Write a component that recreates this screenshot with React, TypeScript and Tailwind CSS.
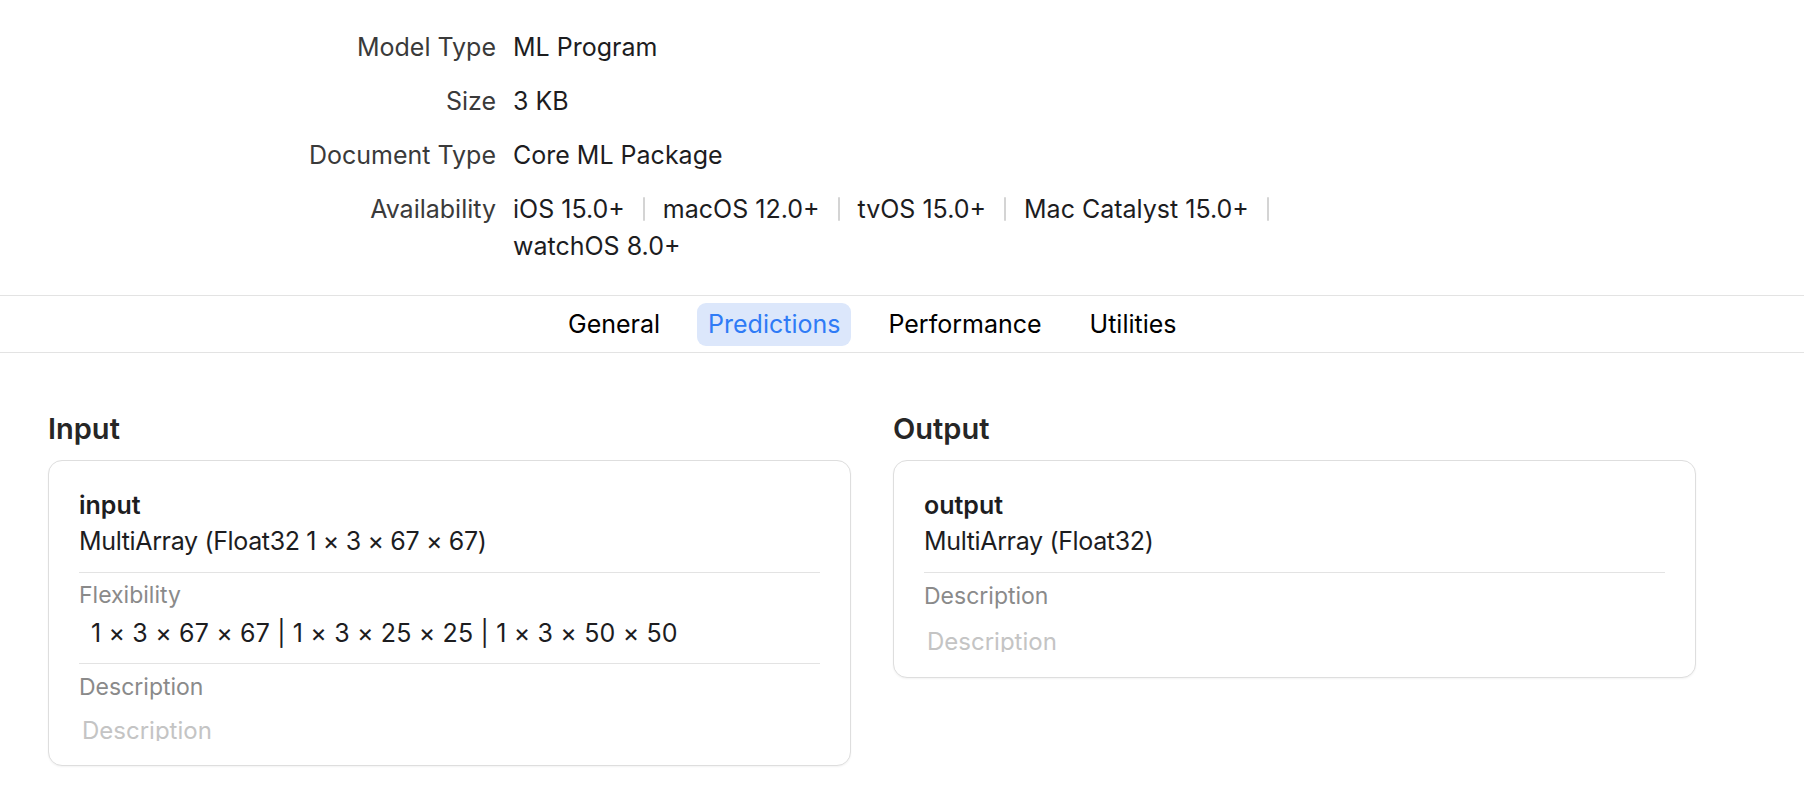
import React from 'react';

const font = { fontFamily: 'Inter, "Noto Sans", "Liberation Sans", sans-serif' };

const details: { label: string; value: string }[] = [
  { label: 'Model Type', value: 'ML Program' },
  { label: 'Size', value: '3 KB' },
  { label: 'Document Type', value: 'Core ML Package' },
];

const platforms = ['iOS 15.0+', 'macOS 12.0+', 'tvOS 15.0+', 'Mac Catalyst 15.0+'];

const tabs = ['General', 'Predictions', 'Performance', 'Utilities'];

function Sep() {
  return <span className="mx-[18px] inline-block h-[24px] w-[2px] rounded bg-[#d4d4d4] align-middle" />;
}

function Divider() {
  return <div className="h-px bg-[#e3e3e3]" />;
}

function Placeholder() {
  // text field placeholder, clipped by the field
  return (
    <div className="h-[25px] overflow-hidden pl-[3px]">
      <div className="text-[24px] leading-[30px] text-[#c4c4c4]">Description</div>
    </div>
  );
}

function FeatureCard({ name, type, flex }: { name: string; type: string; flex?: string }) {
  return (
    <div className={`w-[803px] rounded-[14px] border border-[#dedede] bg-white px-[30px] pt-[28px] shadow-[0_1px_2px_rgba(0,0,0,0.05)] ${flex ? 'pb-[24px]' : 'pb-[25px]'}`}>
      <div className="text-[25px] font-semibold leading-[32px] text-[#1d1d1f]">{name}</div>
      <div className="mt-[4px] text-[25px] leading-[32px] tracking-[-0.35px] text-[#1d1d1f]">{type}</div>
      <div className="mt-[15px]"><Divider /></div>
      {flex && (
        <>
          <div className="mt-[7px] text-[23px] leading-[30px] text-[#8a8a8a]">Flexibility</div>
          <div className="mt-[7px] pl-[12px] text-[25px] leading-[32px] tracking-[0.15px] text-[#1d1d1f]">{flex}</div>
          <div className="mt-[14px]"><Divider /></div>
        </>
      )}
      <div className="mt-[8px] text-[23px] leading-[30px] text-[#8a8a8a]">Description</div>
      <div className={flex ? 'mt-[14px]' : 'mt-[16px]'}><Placeholder /></div>
    </div>
  );
}

export default function App() {
  return (
    <div className="min-h-screen bg-white text-[#1d1d1f]" style={font}>
      <div className="grid grid-cols-[496px_1fr] gap-x-[17px] gap-y-[22px] pt-[31px]">
        {details.map(d => (
          <React.Fragment key={d.label}>
            <div className="text-right text-[25px] leading-[32px] text-[#3a3a3a]">{d.label}</div>
            <div className="text-[25px] leading-[32px]">{d.value}</div>
          </React.Fragment>
        ))}
        <div className="text-right text-[25px] leading-[32px] text-[#3a3a3a]">Availability</div>
        <div className="flex flex-col gap-[5px] text-[25px] leading-[32px]">
          <div className="flex items-center">
            {platforms.map(p => (
              <React.Fragment key={p}>
                <span>{p}</span>
                <Sep />
              </React.Fragment>
            ))}
          </div>
          <div>watchOS 8.0+</div>
        </div>
      </div>

      <div className="mt-[33px]"><Divider /></div>
      <div className="flex h-[56px] items-center gap-[26px] pl-[557px]">
        {tabs.map(t => (
          <div
            key={t}
            className={
              t === 'Predictions'
                ? 'rounded-[9px] bg-[#dce7fb] px-[11px] text-[25px] leading-[43px] text-[#2f7bf6]'
                : 'px-[11px] text-[25px] leading-[43px] text-black'
            }
          >
            {t}
          </div>
        ))}
      </div>
      <Divider />

      <div className="flex items-start gap-[42px] pl-[48px] pt-[58px]">
        <div className="flex flex-col gap-[13px]">
          <div className="text-[29px] font-semibold leading-[36px] text-[#262626]">Input</div>
          <FeatureCard
            name="input"
            type="MultiArray (Float32 1 × 3 × 67 × 67)"
            flex="1 × 3 × 67 × 67 | 1 × 3 × 25 × 25 | 1 × 3 × 50 × 50"
          />
        </div>
        <div className="flex flex-col gap-[13px]">
          <div className="text-[29px] font-semibold leading-[36px] text-[#262626]">Output</div>
          <FeatureCard name="output" type="MultiArray (Float32)" />
        </div>
      </div>
    </div>
  );
}
